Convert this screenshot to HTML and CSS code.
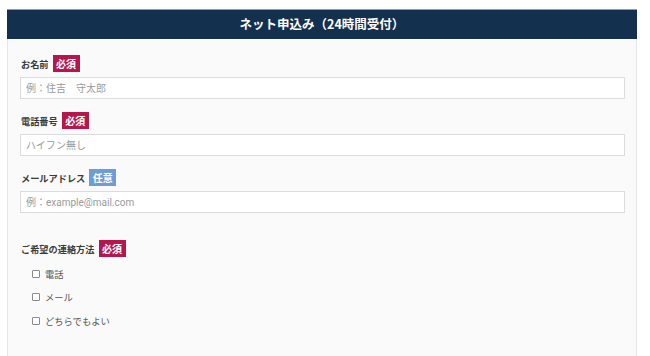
FILE: index.html
```html
<!DOCTYPE html>
<html lang="ja">
<head>
<meta charset="utf-8">
<title>ネット申込み</title>
<link rel="stylesheet" href="styles.css">
</head>
<body>
<div class="panel">
  <div class="panel-head">ネット申込み（24時間受付）</div>
  <form class="panel-body">
    <div class="field">
      <div class="label-row"><span class="label">お名前</span><span class="badge req">必須</span></div>
      <input class="text" type="text" placeholder="例：住吉　守太郎">
    </div>
    <div class="field">
      <div class="label-row"><span class="label">電話番号</span><span class="badge req">必須</span></div>
      <input class="text" type="text" placeholder="ハイフン無し">
    </div>
    <div class="field">
      <div class="label-row"><span class="label">メールアドレス</span><span class="badge opt">任意</span></div>
      <input class="text" type="text" placeholder="例：example@mail.com">
    </div>
    <div class="field field-check">
      <div class="label-row"><span class="label">ご希望の連絡方法</span><span class="badge req">必須</span></div>
      <ul class="checks">
        <li><label class="check"><input type="checkbox" class="box"><span>電話</span></label></li>
        <li><label class="check"><input type="checkbox" class="box"><span>メール</span></label></li>
        <li><label class="check"><input type="checkbox" class="box"><span>どちらでもよい</span></label></li>
      </ul>
    </div>
  </form>
</div>
</body>
</html>
```
FILE: styles.css
```css
* { box-sizing: border-box; }
html, body { margin: 0; padding: 0; background: #ffffff; }
body {
  font-family: Roboto, "Noto Sans CJK JP", "Noto Sans", sans-serif;
  color: #333;
}
.panel {
  width: 630px;
  margin: 9px 0 0 7px;
}
.panel-head {
  height: 30px;
  background: #13304f;
  border-top: 1px solid #8d9cb0;
  color: #ffffff;
  font-family: "Noto Sans CJK JP", sans-serif;
  font-weight: 700;
  font-size: 12.5px;
  line-height: 28px;
  text-align: center;
}
.panel-body {
  margin: 0;
  background: #fafafa;
  border-left: 1px solid #e6e6e6;
  border-right: 1px solid #e6e6e6;
  padding: 16px 11px 40px 12px;
  height: 330px;
}
.field { margin-bottom: 13px; }
.field-check { margin-top: 27px; }
.label-row {
  display: flex;
  align-items: center;
  gap: 4px;
  height: 17px;
  margin-bottom: 5px;
}
.label {
  font-family: "Noto Sans CJK JP", sans-serif;
  font-weight: 700;
  font-size: 9.2px;
  color: #3a3a3a;
  margin-left: 1px;
}
.badge {
  display: inline-flex;
  align-items: center;
  justify-content: center;
  height: 17px;
  width: 27px;
  color: #fff;
  font-family: "Noto Sans CJK JP", sans-serif;
  font-weight: 700;
  font-size: 10px;
}
.badge.req { background: #b5174d; }
.badge.opt { background: #6e9cd4; }
.text {
  display: block;
  width: 100%;
  height: 22px;
  margin: 0;
  padding: 0 5px;
  background: #fff;
  border: 1px solid #dcdcdc;
  border-radius: 0;
  font-family: Roboto, "Noto Sans CJK JP", sans-serif;
  font-size: 10px;
  color: #333;
  outline: none;
}
.text::placeholder { color: #9a9a9a; }
.checks {
  list-style: none;
  margin: 4px 0 0 0;
  padding: 0 0 0 12px;
}
.checks li {
  height: 23.5px;
  display: flex;
  align-items: center;
}
.check {
  display: flex;
  align-items: center;
  font-family: "Noto Sans CJK JP", sans-serif;
  font-size: 9.3px;
  color: #555;
}
.box {
  appearance: none;
  -webkit-appearance: none;
  width: 8px;
  height: 8px;
  margin: 0 5px 0 0;
  border: 1px solid #8a8a8a;
  border-radius: 1px;
  background: #fff;
}
```
